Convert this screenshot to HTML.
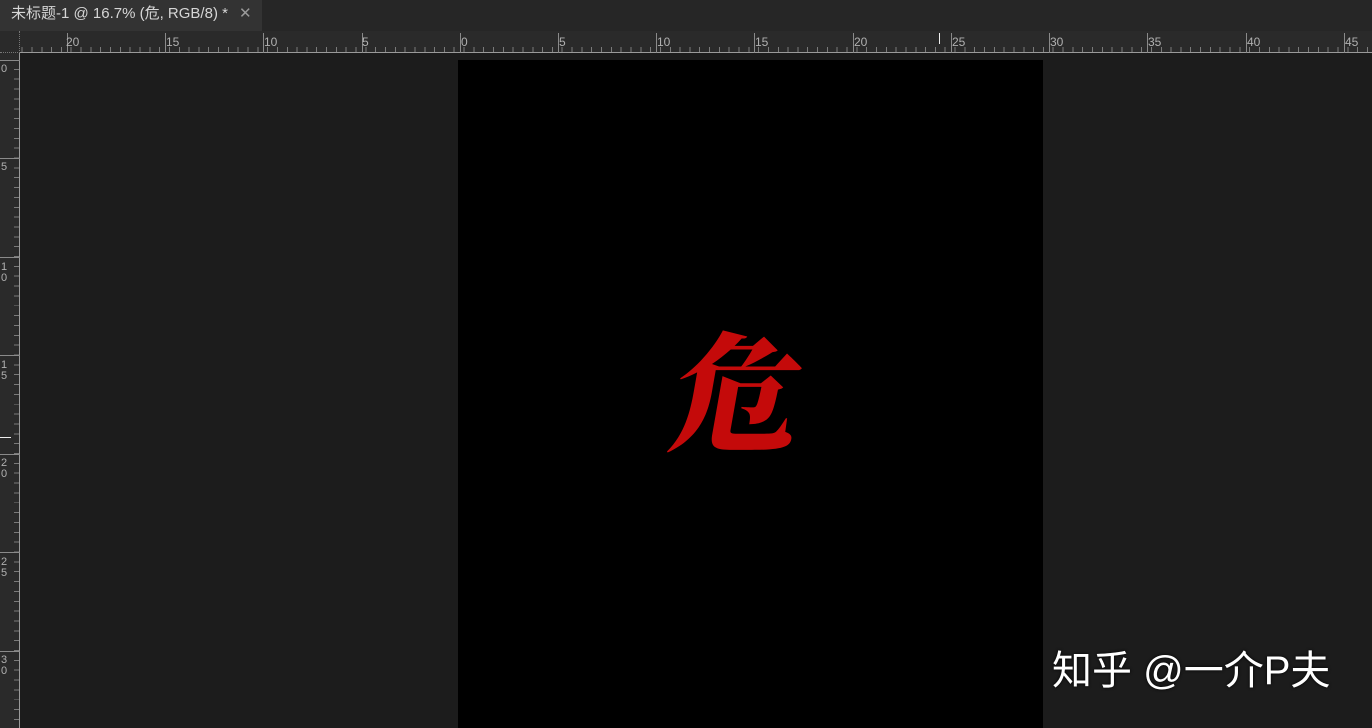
<!DOCTYPE html>
<html><head><meta charset="utf-8"><style>
*{margin:0;padding:0;box-sizing:border-box}
body{width:1372px;height:728px;overflow:hidden;background:#1c1c1c;position:relative;font-family:"Liberation Sans","Noto Sans CJK SC",sans-serif}
.tabbar{position:absolute;left:0;top:0;width:1372px;height:31px;background:#262626}
.tab{position:absolute;left:0;top:0;width:262px;height:31px;background:#333;color:#d6d6d6;font-size:15px;line-height:28px;padding-left:11px}
.tab .x{position:absolute;left:239px;top:0;color:#9a9a9a;font-size:15px}
.hr{position:absolute;left:0;top:31px;width:1372px;height:22px;background:#2a2a2a;border-bottom:1px solid #9a9a9a;
background-image:repeating-linear-gradient(90deg,transparent 0,transparent 8.82px,#7a7a7a 8.82px,#7a7a7a 9.82px);background-size:1372px 5px;background-repeat:no-repeat;background-position:2.6px 16px}
.vr{position:absolute;left:0;top:53px;width:20px;height:675px;background:#2a2a2a;border-right:1px solid #9a9a9a;
background-image:repeating-linear-gradient(180deg,transparent 0,transparent 8.85px,#7a7a7a 8.85px,#7a7a7a 9.85px);background-size:5px 675px;background-repeat:no-repeat;background-position:14px 7px}
.corner{position:absolute;left:0;top:31px;width:20px;height:22px;background:#2a2a2a;border-right:1px dotted #777;border-bottom:1px dotted #777}
.hm{position:absolute;top:33px;width:1px;height:20px;background:#8a8a8a}
.hl{position:absolute;top:35px;color:#b0b0b0;font-size:12px;line-height:14px}
.vm{position:absolute;left:0;width:20px;height:1px;background:#8a8a8a}
.vl{position:absolute;left:0;color:#b0b0b0;font-size:11px;line-height:11px;width:8px;text-align:center}
.doc{position:absolute;left:458px;top:60px;width:585px;height:668px;background:#000}
.ch{position:absolute;left:676px;top:305px;font-family:"Noto Serif CJK SC",serif;font-weight:900;font-size:128px;line-height:160px;color:#c40a0a;transform:skewX(-10deg)}
.wm{position:absolute;left:1052px;top:646px;color:#fff;font-size:40px;line-height:50px;font-family:"Liberation Sans","Noto Sans CJK SC",sans-serif;text-shadow:0 0 3px #000}
</style></head><body>
<div class="tabbar"><div class="tab">未标题-1 @ 16.7% (危, RGB/8) *<span class="x">✕</span></div></div>
<div class="hr"></div>
<div class="vr"></div>
<div class="corner"></div>
<div class="hm" style="left:67px"></div><div class="hl" style="left:66px">20</div>
<div class="hm" style="left:165px"></div><div class="hl" style="left:166px">15</div>
<div class="hm" style="left:263px"></div><div class="hl" style="left:264px">10</div>
<div class="hm" style="left:362px"></div><div class="hl" style="left:362px">5</div>
<div class="hm" style="left:460px"></div><div class="hl" style="left:461px">0</div>
<div class="hm" style="left:558px"></div><div class="hl" style="left:559px">5</div>
<div class="hm" style="left:656px"></div><div class="hl" style="left:657px">10</div>
<div class="hm" style="left:754px"></div><div class="hl" style="left:755px">15</div>
<div class="hm" style="left:853px"></div><div class="hl" style="left:854px">20</div>
<div class="hm" style="left:951px"></div><div class="hl" style="left:952px">25</div>
<div class="hm" style="left:1049px"></div><div class="hl" style="left:1050px">30</div>
<div class="hm" style="left:1147px"></div><div class="hl" style="left:1148px">35</div>
<div class="hm" style="left:1246px"></div><div class="hl" style="left:1247px">40</div>
<div class="hm" style="left:1344px"></div><div class="hl" style="left:1345px">45</div>
<div style="position:absolute;left:939px;top:33px;width:1px;height:11px;background:#eee"></div>
<div class="vm" style="top:60px"></div><div class="vl" style="top:64px">0</div>
<div class="vm" style="top:158px"></div><div class="vl" style="top:162px">5</div>
<div class="vm" style="top:257px"></div><div class="vl" style="top:262px">1<br>0</div>
<div class="vm" style="top:355px"></div><div class="vl" style="top:360px">1<br>5</div>
<div class="vm" style="top:454px"></div><div class="vl" style="top:458px">2<br>0</div>
<div class="vm" style="top:552px"></div><div class="vl" style="top:557px">2<br>5</div>
<div class="vm" style="top:651px"></div><div class="vl" style="top:655px">3<br>0</div>
<div style="position:absolute;left:0;top:437px;width:11px;height:1px;background:#eee"></div>
<div class="doc"></div>
<div class="ch">危</div>
<div class="wm">知乎 @一介P夫</div>
</body></html>
